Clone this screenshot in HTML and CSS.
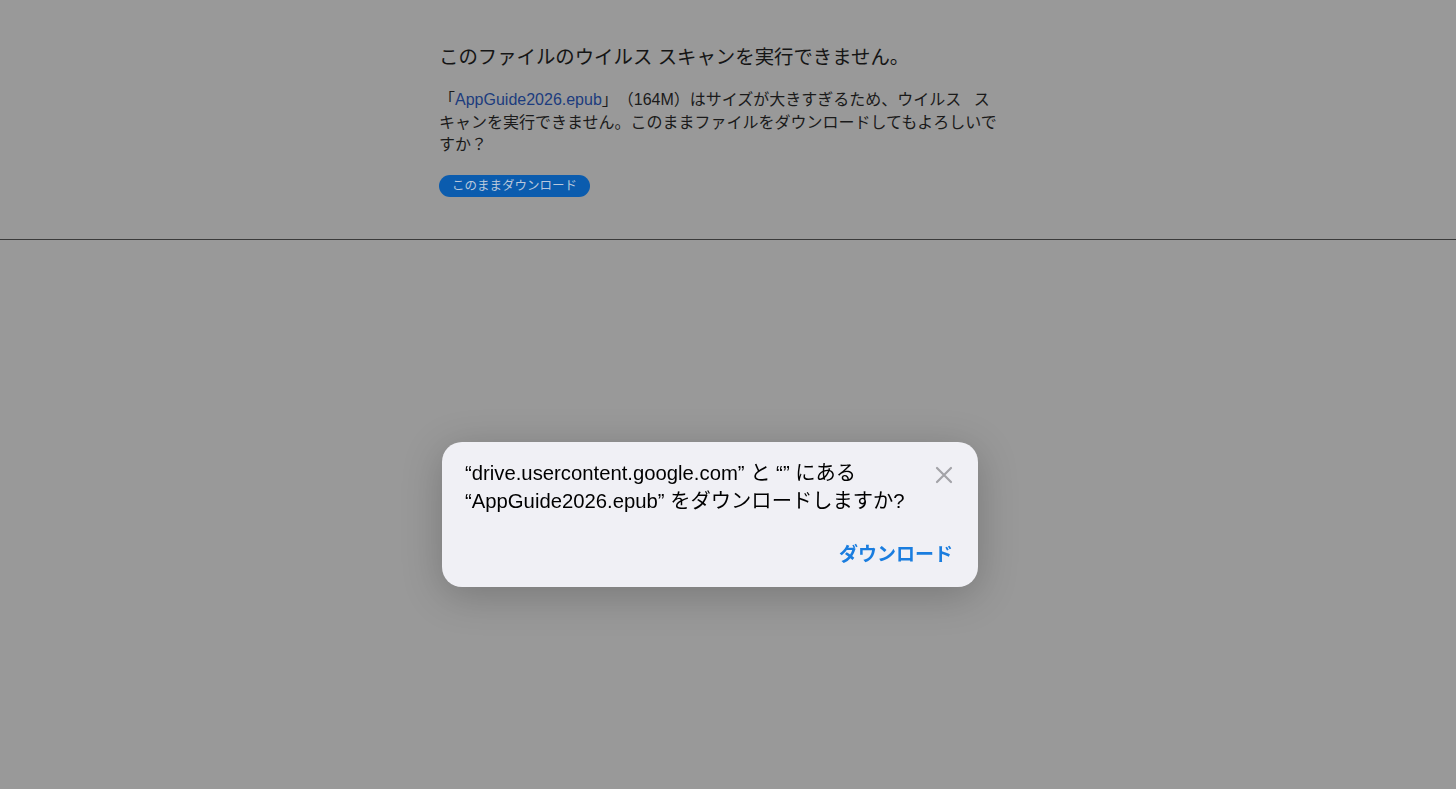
FILE: index.html
```html
<!DOCTYPE html>
<html lang="ja">
<head>
<meta charset="UTF-8">
<meta name="viewport" content="width=device-width, initial-scale=1.0">
<title>Google Drive - ウイルス スキャンの警告</title>
<link rel="stylesheet" href="styles.css">
</head>
<body>

<div class="page">
  <div class="warning">
    <h1 class="warning-title">このファイルのウイルス スキャンを実行できません。</h1>
    <p class="warning-text">「<a href="#" class="file-link">AppGuide2026.epub</a>」（164M）はサイズが大きすぎるため、ウイルス スキャンを実行できません。このままファイルをダウンロードしてもよろしいですか？</p>
    <button class="download-btn" type="button">このままダウンロード</button>
  </div>
</div>

<!-- download confirmation sheet -->
<div class="dialog" role="dialog">
  <div class="dialog-head">
    <p class="dialog-text">“drive.usercontent.google.com” と “” にある “AppGuide2026.epub” をダウンロードしますか?</p>
    <button class="dialog-close" type="button" aria-label="閉じる">
      <svg width="18" height="18" viewBox="0 0 18 18">
        <path d="M2 2 L16 16 M16 2 L2 16" stroke="#a3a3a8" stroke-width="2.2" stroke-linecap="round" fill="none"/>
      </svg>
    </button>
  </div>
  <div class="dialog-actions">
    <button class="dialog-action" type="button">ダウンロード</button>
  </div>
</div>

</body>
</html>
```
FILE: styles.css
```css
html, body {
  margin: 0;
  padding: 0;
  height: 100%;
}
body {
  background-color: #999999;
  font-family: "Liberation Sans", "Noto Sans CJK JP", sans-serif;
  color: #1a1a1a;
  text-spacing-trim: space-all;
}
.page {
  height: 239px;
  border-bottom: 1px solid #3a3a3a;
}
.warning {
  width: 562px;
  margin-left: 439px;
  padding-top: 44px;
}
.warning-title {
  margin: 0 0 19px 0;
  font-size: 19.4px;
  font-weight: normal;
  line-height: 26px;
  color: #151515;
}
.warning-text {
  margin: 0 0 18px 0;
  font-size: 16px;
  line-height: 22.5px;
  word-spacing: 8px;
  color: #1a1a1a;
}
.file-link {
  color: #1c3c7e;
  text-decoration: none;
}
.download-btn {
  display: block;
  height: 22px;
  padding: 0 13px;
  border: none;
  border-radius: 11px;
  background-color: #0b5cae;
  color: #b9c8dc;
  font-family: "Liberation Sans", "Noto Sans CJK JP", sans-serif;
  font-size: 12.5px;
  line-height: 22px;
  cursor: pointer;
}

/* floating sheet over the dimmed page */
.dialog {
  position: fixed;
  top: 442px;
  left: 442px;
  width: 536px;
  box-sizing: border-box;
  padding: 17px 25px 18px 23px;
  background-color: #f0f0f5;
  border-radius: 20px;
  box-shadow: 0 8px 40px rgba(0, 0, 0, 0.22);
}
.dialog-head {
  display: flex;
  align-items: flex-start;
  gap: 12px;
}
.dialog-text {
  flex: 1;
  margin: 0;
  font-size: 20.3px;
  line-height: 28px;
  color: #000;
}
.dialog-close {
  margin-top: 7px;
  margin-right: 0;
  padding: 0;
  border: none;
  background: none;
  width: 18px;
  height: 18px;
  cursor: pointer;
}
.dialog-actions {
  display: flex;
  justify-content: flex-end;
  margin-top: 26px;
}
.dialog-action {
  padding: 0;
  border: none;
  background: none;
  font-family: "Liberation Sans", "Noto Sans CJK JP", sans-serif;
  font-size: 19px;
  font-weight: bold;
  line-height: 28px;
  color: #1a7ddf;
  cursor: pointer;
}
```
